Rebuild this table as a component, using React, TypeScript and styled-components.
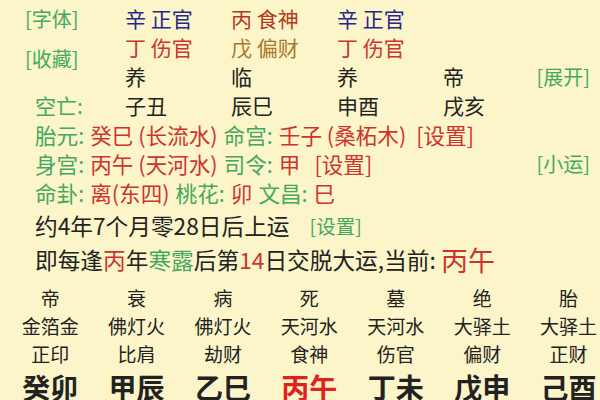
import React from "react";
import styled, { createGlobalStyle } from "styled-components";

const GlobalStyle = createGlobalStyle`
  html, body { margin: 0; padding: 0; background: #fbf5c9; }
  body { font-family: "Noto Sans CJK SC", "Noto Sans", sans-serif; color: #222; }
`;

const C = {
  green: "#45a862",
  blue: "#26288a",
  brick: "#b23a22",
  red: "#cc3430",
  ochre: "#a8782c",
  ink: "#222222",
  hot: "#e0221c",
};

const Page = styled.div`
  width: 600px;
  height: 400px;
  overflow: hidden;
  padding-top: 4px;
  box-sizing: border-box;
`;

const TopGrid = styled.div`
  display: grid;
  grid-template-columns: 100px repeat(3, 106px) 1fr auto;
  grid-auto-rows: 29px;
  padding: 0 10px 0 25px;
  font-size: 21px;
  line-height: 29px;
  white-space: nowrap;
`;

const Cell = styled.span<{ $c?: string; $indent?: number }>`
  color: ${(p) => p.$c || C.ink};
  padding-left: ${(p) => p.$indent || 0}px;
`;

const SideTag = styled.span<{ $span?: number }>`
  color: ${C.green};
  font-size: 20px;
  ${(p) =>
    p.$span
      ? `grid-row: 2 / span ${p.$span}; grid-column: 1; align-self: center; margin-bottom: 8px;`
      : ""}
`;

const InfoLine = styled.div`
  display: flex;
  align-items: center;
  height: 29px;
  padding: 0 10px 0 35px;
  font-size: 21.6px;
  white-space: nowrap;
`;

const Lbl = styled.span`
  color: ${C.green};
  margin-right: 6px;
`;

const Val = styled.span<{ $gap?: number }>`
  color: ${C.red};
  margin-right: ${(p) => (p.$gap ?? 6)}px;
`;

const Right = styled.span`
  margin-left: auto;
  color: ${C.green};
  font-size: 20px;
`;

const LuckLine = styled.div<{ $h: number; $mt: number }>`
  display: flex;
  align-items: center;
  height: ${(p) => p.$h}px;
  margin-top: ${(p) => p.$mt}px;
  padding-left: 35px;
  font-size: 22.7px;
  color: ${C.ink};
  white-space: nowrap;
`;

const Hl = styled.span<{ $c: string; $size?: number }>`
  color: ${(p) => p.$c};
  ${(p) => (p.$size ? `font-size: ${p.$size}px;` : "")}
`;

const SetTag = styled.span`
  color: ${C.green};
  font-size: 19.5px;
  margin-left: 20px;
`;

const Table = styled.div`
  display: grid;
  grid-template-columns: repeat(7, 86.4px);
  grid-template-rows: 28px 28px 27px 40px;
  padding-left: 7px;
  margin-top: 8px;
  text-align: center;
  white-space: nowrap;
`;

const TCell = styled.span<{ $big?: boolean; $c?: string }>`
  font-size: ${(p) => (p.$big ? 28 : 19)}px;
  line-height: ${(p) => (p.$big ? 40 : 28)}px;
  font-weight: ${(p) => (p.$big ? 700 : 400)};
  color: ${(p) => p.$c || C.ink};
`;

const stages = ["帝", "衰", "病", "死", "墓", "绝", "胎"];
const nayin = ["金箔金", "佛灯火", "佛灯火", "天河水", "天河水", "大驿土", "大驿土"];
const gods = ["正印", "比肩", "劫财", "食神", "伤官", "偏财", "正财"];
const pillars = ["癸卯", "甲辰", "乙巳", "丙午", "丁未", "戊申", "己酉"];

export default function App() {
  return (
    <>
      <GlobalStyle />
      <Page>
        <TopGrid>
          <SideTag>[字体]</SideTag>
          <Cell $c={C.blue}>辛 正官</Cell>
          <Cell $c={C.brick}>丙 食神</Cell>
          <Cell $c={C.blue}>辛 正官</Cell>
          <span />
          <span />

          <SideTag $span={2}>[收藏]</SideTag>
          <Cell $c={C.red}>丁 伤官</Cell>
          <Cell $c={C.ochre}>戊 偏财</Cell>
          <Cell $c={C.red}>丁 伤官</Cell>
          <span />
          <span />

          <Cell>养</Cell>
          <Cell>临</Cell>
          <Cell>养</Cell>
          <Cell>帝</Cell>
          <SideTag>[展开]</SideTag>

          <Cell $c={C.green} $indent={10}>空亡:</Cell>
          <Cell>子丑</Cell>
          <Cell>辰巳</Cell>
          <Cell>申酉</Cell>
          <Cell>戌亥</Cell>
          <span />
        </TopGrid>

        <InfoLine>
          <Lbl>胎元:</Lbl>
          <Val>癸巳 (长流水)</Val>
          <Lbl>命宫:</Lbl>
          <Val $gap={10}>壬子 (桑柘木)</Val>
          <Val>[设置]</Val>
        </InfoLine>
        <InfoLine>
          <Lbl>身宫:</Lbl>
          <Val>丙午 (天河水)</Val>
          <Lbl>司令:</Lbl>
          <Val $gap={14}>甲</Val>
          <Val>[设置]</Val>
          <Right>[小运]</Right>
        </InfoLine>
        <InfoLine>
          <Lbl>命卦:</Lbl>
          <Val>离(东四)</Val>
          <Lbl>桃花:</Lbl>
          <Val>卯</Val>
          <Lbl>文昌:</Lbl>
          <Val>巳</Val>
        </InfoLine>

        <LuckLine $h={29} $mt={4}>
          约4年7个月零28日后上运
          <SetTag>[设置]</SetTag>
        </LuckLine>
        <LuckLine $h={34} $mt={2}>
          即每逢<Hl $c={C.red}>丙</Hl>年<Hl $c={C.green}>寒露</Hl>后第<Hl $c={C.red}>14</Hl>日交脱大运,当前:&nbsp;
          <Hl $c={C.red} $size={27}>丙午</Hl>
        </LuckLine>

        <Table>
          {stages.map((s) => (
            <TCell key={"s" + s}>{s}</TCell>
          ))}
          {nayin.map((s, i) => (
            <TCell key={"n" + i}>{s}</TCell>
          ))}
          {gods.map((s) => (
            <TCell key={"g" + s}>{s}</TCell>
          ))}
          {pillars.map((s) => (
            <TCell key={"p" + s} $big $c={s === "丙午" ? C.hot : undefined}>
              {s}
            </TCell>
          ))}
        </Table>
      </Page>
    </>
  );
}
